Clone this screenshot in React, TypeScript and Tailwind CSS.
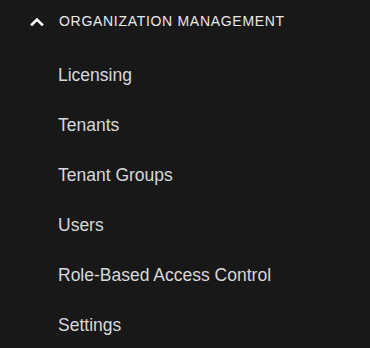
import React from "react";

const items = ["Licensing", "Tenants", "Tenant Groups", "Users", "Role-Based Access Control", "Settings"];

export default function App() {
  return (
    <div className="w-[370px] h-[348px] bg-[#181818] overflow-hidden" style={{ fontFamily: '"Liberation Sans", Arial, sans-serif' }}>
      <div className="h-10 flex items-center pl-[30px] pt-[2px]">
        <svg width="14" height="9" viewBox="0 0 14 9" className="mr-[15px]">
          <path d="M2 7.5 L7 2.5 L12 7.5" stroke="#ffffff" strokeWidth="2.6" fill="none" strokeLinecap="square" />
        </svg>
        <span className="text-[14px] tracking-[0.7px] text-[#e8e8e8]">ORGANIZATION MANAGEMENT</span>
      </div>
      <div className="mt-[10px]">
        {items.map((t) => (
          <div key={t} className="h-[50px] flex items-center pl-[58px] text-[17.5px] text-[#d8d8d8]">
            {t}
          </div>
        ))}
      </div>
    </div>
  );
}
